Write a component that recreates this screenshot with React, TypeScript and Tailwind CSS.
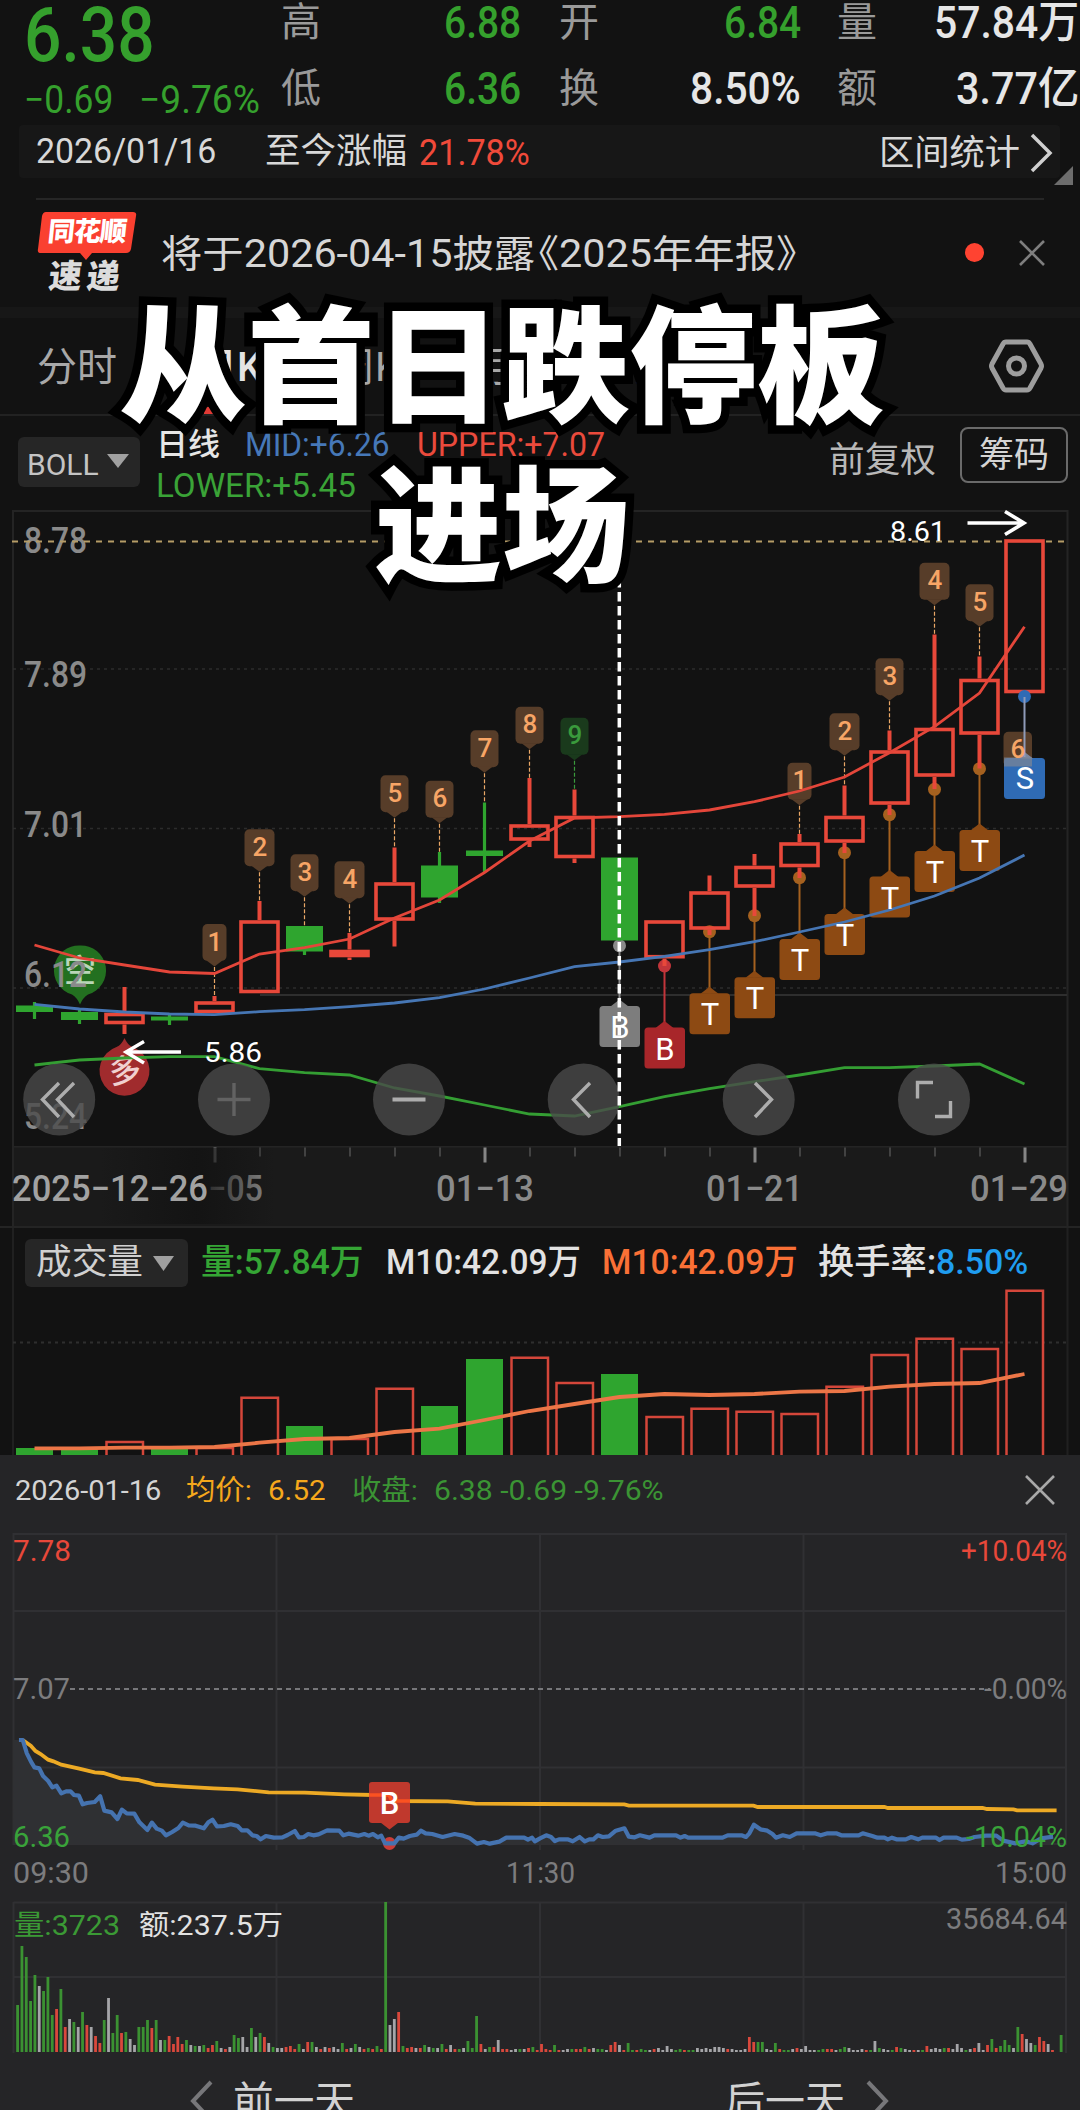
import React, { useLayoutEffect, useRef } from 'react';

const UP = '#e8483a';
const DOWN = '#2fa52f';

const cx = (i: number) => 34.5 + i * 45;

// [dir, bodyTop, bodyBottom, wickTop, wickBottom]
type Candle = ['u' | 'd', number, number, number, number];

const candles: Candle[] = [
  ['d', 1005.5, 1012, 1002, 1019],
  ['d', 1012, 1020, 1008, 1024],
  ['u', 1012.5, 1024.5, 987, 1034],
  ['d', 1016.5, 1020.5, 1013, 1025],
  ['u', 1001, 1013.5, 996, 1013.5],
  ['u', 920, 993.5, 901, 993.5],
  ['d', 926, 951.5, 926, 955],
  ['u', 949.5, 957.5, 933, 960],
  ['u', 882, 921, 847.5, 946.5],
  ['d', 865.5, 897.5, 852, 903],
  ['d', 850.5, 856, 802.5, 873],
  ['u', 824, 841, 778, 847],
  ['u', 815.5, 858.5, 789.5, 863],
  ['d', 857.5, 940.5, 857.5, 940.5],
  ['u', 920, 958.7, 920, 966],
  ['u', 891, 930, 875.5, 935],
  ['u', 865.5, 888, 854, 916],
  ['u', 842, 867.5, 834, 878],
  ['u', 815.5, 843, 785.5, 853],
  ['u', 750, 805, 730.5, 815],
  ['u', 727.5, 777, 634.5, 789],
  ['u', 678.5, 735, 656.5, 768.5],
  ['u', 539, 693.5, 539, 693.5],
];

const upper = [945, 958, 965, 972, 973.5, 954, 947.7, 939, 918, 900, 872.5, 841, 818, 816.7, 814.3, 810, 801.7, 791, 777, 752.7, 726.7, 693, 626.7];
const mid = [1004.3, 1009, 1012, 1014, 1014.7, 1011.7, 1009.7, 1006.7, 1003, 997.7, 989, 978, 966.7, 962, 956.3, 949.7, 941.7, 932, 922, 910, 896, 878, 855];
const lower = [1065, 1060, 1058, 1056.7, 1056.7, 1068.7, 1072.7, 1075, 1088, 1096, 1105, 1114, 1116, 1106.7, 1096.7, 1088.7, 1081.7, 1075, 1067.7, 1067.7, 1066, 1064, 1084];

const counts = [
  { i: 4, n: '1', y: 924, w: 24 },
  { i: 5, n: '2', y: 829.3, w: 30 },
  { i: 6, n: '3', y: 854.3, w: 28 },
  { i: 7, n: '4', y: 861.3, w: 30 },
  { i: 8, n: '5', y: 775.3, w: 28 },
  { i: 9, n: '6', y: 780.7, w: 28 },
  { i: 10, n: '7', y: 730.3, w: 28 },
  { i: 11, n: '8', y: 706.7, w: 28 },
  { i: 12, n: '9', y: 717.7, w: 28 },
  { i: 17, n: '1', y: 762.7, w: 24 },
  { i: 18, n: '2', y: 713.3, w: 30 },
  { i: 19, n: '3', y: 658.3, w: 28 },
  { i: 20, n: '4', y: 562.7, w: 30 },
  { i: 21, n: '5', y: 584.3, w: 28 },
];

const trades = [
  { i: 13, t: 'B', y: 1006, dot: 945.7, box: '#7d7d7d', line: '#8a8a8a' },
  { i: 14, t: 'B', y: 1027.5, dot: 966, box: '#a8262a', line: '#c2353a' },
  { i: 15, t: 'T', y: 993.3, dot: 931.7, box: '#8d4a13', line: '#a5611f' },
  { i: 16, t: 'T', y: 977.3, dot: 915.7, box: '#8d4a13', line: '#a5611f' },
  { i: 17, t: 'T', y: 939, dot: 877.7, box: '#8d4a13', line: '#a5611f' },
  { i: 18, t: 'T', y: 914, dot: 852.7, box: '#8d4a13', line: '#a5611f' },
  { i: 19, t: 'T', y: 876.5, dot: 814.7, box: '#8d4a13', line: '#a5611f' },
  { i: 20, t: 'T', y: 851, dot: 789.3, box: '#8d4a13', line: '#a5611f' },
  { i: 21, t: 'T', y: 830, dot: 768.7, box: '#8d4a13', line: '#a5611f' },
];

const volumeTops = [1448, 1449, 1441, 1449, 1447, 1396.7, 1426, 1438, 1387.7, 1406, 1359, 1356.7, 1382, 1374, 1416, 1407.7, 1410.7, 1413, 1385.7, 1354, 1337.7, 1348, 1289.7];
const volumeMa = [1448.3, 1448.3, 1447.7, 1447.7, 1447, 1442.7, 1439, 1438, 1432, 1428.7, 1420, 1411, 1404, 1397, 1394, 1395, 1394, 1391.7, 1391, 1386.7, 1384, 1383, 1374];

// intraday lines, in a 3136 x 600 sample grid
const price =
  '55,120 66,120 78,160 90,185 100,202 114,205 125,228 140,243 152,262 164,257 178,280 192,274 205,274 215,285 229,287 240,313 253,309 275,306 291,289 303,332 324,337 341,357 354,329 368,340 390,341 405,367 428,390 441,368 455,386 470,392 482,406 500,396 518,384 531,368 548,376 568,377 592,385 605,367 617,359 630,379 650,378 670,373 690,378 702,391 718,391 733,406 745,408 757,418 772,408 795,413 820,412 835,405 856,393 868,412 882,411 895,402 910,406 925,403 950,391 985,392 997,406 1012,401 1040,407 1058,402 1070,407 1083,402 1097,412 1107,407 1118,430 1145,430 1158,413 1172,416 1190,408 1210,404 1222,392 1236,400 1255,402 1285,411 1320,402 1345,407 1362,413 1385,431 1405,426 1422,431 1450,425 1470,413 1522,413 1533,419 1545,413 1553,424 1568,415 1586,406 1600,411 1611,423 1623,418 1648,418 1663,424 1683,411 1698,424 1711,418 1723,418 1736,406 1750,411 1768,409 1788,392 1813,385 1826,410 1843,412 1858,406 1886,413 1900,406 1963,406 1976,413 1988,408 1998,413 2098,413 2113,406 2153,406 2166,411 2176,400 2189,374 2208,388 2228,392 2243,402 2253,413 2273,406 2293,411 2313,400 2366,400 2383,406 2403,400 2428,400 2443,406 2493,406 2505,400 2533,408 2548,413 2568,413 2578,418 2590,413 2603,418 2630,418 2646,411 2666,418 2678,413 2718,413 2728,420 2740,413 2778,413 2793,419 2813,417 2830,411 2863,407 2893,407 2913,422 2948,430 2978,424 2998,430 3023,415 3058,410';
const average =
  '66,120 90,138 103,153 118,162 140,179 155,184 178,194 230,206 275,217 300,219 350,235 400,240 450,254 530,260 620,265 690,268 780,277 885,278 1000,283 1085,285 1131,303 1300,304 1380,311 1568,312 1813,313 1826,317 2188,317 2200,321 2568,321 2578,324 2853,324 2866,327 2943,328 2953,331 3068,331';

// one token per minute: colour (g/r/w) + bar height
const minuteVolume =
  'g47 g106 g95 g51 g77 w66 g61 g75 g37 r43 g63 r25 w33 g30 w25 g40 r27 w25 r16 r9 g32 w54 g19 g37 r19 g20 w13 w7 g25 g25 g32 r24 g32 w12 g12 r16 r8 r15 r8 g12 w7 g6 w6 g7 r4 r7 g11 w4 r3 w5 g17 g14 w15 w5 g24 w15 g19 r15 w9 g5 w4 w4 r5 r6 r3 g8 w3 r10 g10 w5 r3 w5 r4 w5 w3 g9 r3 w4 g8 w5 r3 g4 r3 g6 r3 g150 w27 w33 r40 g6 r4 r5 w4 r4 g7 w5 g4 w4 g8 r3 w7 r3 g3 w4 g11 g4 g36 r8 w3 g5 r5 w12 r3 r3 w2 w3 g3 w3 r4 g5 r2 r8 r3 r2 g7 r2 w2 w3 g3 r3 r3 g5 r3 w4 g3 g3 w2 r7 r10 w7 r2 g9 g2 r2 g3 g2 w2 r3 w4 w2 w6 w3 g2 g3 r2 g2 g2 w4 w3 w4 w3 w5 w5 w4 r3 w3 w2 w2 w3 r15 r10 g10 g10 w3 w2 g9 r3 g2 g2 w3 r4 w3 w6 w2 w2 g2 g3 r3 r3 w2 g3 g5 w4 w2 w2 w3 r2 g2 w11 g4 w3 w2 g2 r5 g4 w3 w2 r2 w2 g2 r6 w3 w4 w3 g4 r4 w3 w8 w4 g2 w3 r4 w9 w2 r7 g13 r4 g6 g12 g7 w4 g25 r18 w13 w9 g7 r15 r11 w8 r2 w0 g17';
const minuteFill: Record<string, string> = { g: '#3b9232', r: '#d9483c', w: '#a5a5a8' };

const toPoints = (ys: number[]) => ys.map((y, i) => `${cx(i)},${y}`).join(' ');

interface FitProps {
  w: number;
  className?: string;
  children: React.ReactNode;
}

// squeezes a run of text into a fixed width, like the condensed digits of the quote font
function Fit({ w, className = '', children }: FitProps) {
  const ref = useRef<HTMLSpanElement>(null);
  useLayoutEffect(() => {
    const el = ref.current;
    if (el) el.style.transform = `scaleX(${w / el.offsetWidth})`;
  }, [w]);
  return (
    <span className={`block shrink-0 whitespace-nowrap ${className}`} style={{ width: w }}>
      <span ref={ref} className="inline-block origin-left">
        {children}
      </span>
    </span>
  );
}

interface LabelProps {
  x: number;
  y: number;
  w: number;
  size: number;
  fill: string;
  weight?: number;
  children: string;
}

function Label({ x, y, w, size, fill, weight, children }: LabelProps) {
  return (
    <text x={x} y={y} textLength={w} lengthAdjust="spacingAndGlyphs" fontSize={size} fontWeight={weight} fill={fill}>
      {children}
    </text>
  );
}

function Quote() {
  return (
    <div className="flex h-[125px] shrink-0">
      <div className="w-[281px] shrink-0 pl-[24px] text-[#35a02d]">
        <Fit w={131} className="h-[70px] text-[76px] leading-[70px] font-medium">6.38</Fit>
        <div className="flex h-[56px] text-[39px] leading-[60px]">
          <Fit w={89}>−0.69</Fit>
          <Fit w={121} className="ml-[26px]">−9.76%</Fit>
        </div>
      </div>
      <div className="grid w-[798px] shrink-0 grid-cols-[278px_278px_242px] grid-rows-[66px_59px] text-[40px] leading-[46px] text-[#9a9a9a]">
        <Cell label="高" value="6.88" w={77} pr={38} tone="text-[#35a02d]" />
        <Cell label="开" value="6.84" w={77} pr={36} tone="text-[#35a02d]" />
        <Cell label="量" value="57.84万" w={145} pr={0} tone="text-[#e6e6e6]" />
        <Cell label="低" value="6.36" w={77} pr={38} tone="text-[#35a02d]" />
        <Cell label="换" value="8.50%" w={111} pr={36} tone="text-[#e6e6e6]" />
        <Cell label="额" value="3.77亿" w={123} pr={0} tone="text-[#e6e6e6]" />
      </div>
    </div>
  );
}

function Cell({ label, value, w, pr, tone }: { label: string; value: string; w: number; pr: number; tone: string }) {
  return (
    <div className="flex justify-between" style={{ paddingRight: pr }}>
      <span>{label}</span>
      <Fit w={w} className={`text-[44px] font-medium ${tone}`}>{value}</Fit>
    </div>
  );
}

function RangeBar() {
  return (
    <div className="relative ml-[19px] mr-[20px] flex h-[53px] shrink-0 items-center rounded bg-[#171717] pl-[17px] text-[35px] text-[#d8d8d8]">
      <Fit w={180} className="pt-[2px]">2026/01/16</Fit>
      <Fit w={142} className="ml-[49px] pt-[2px]">至今涨幅</Fit>
      <Fit w={111} className="ml-[12px] pt-[2px] text-[36px] text-[#f04a3a]">21.78%</Fit>
      <Fit w={141} className="ml-[349px] pt-[5px]">区间统计</Fit>
      <svg className="ml-[9px] mt-[3px] h-[42px] w-[26px]" viewBox="0 0 26 42" fill="none" stroke="#d0d0d0" strokeWidth="3.5">
        <path d="M3 3l18 18L3 39" />
      </svg>
      <svg className="absolute -right-[13px] -bottom-[7px] h-[19px] w-[19px]" viewBox="0 0 19 19">
        <path d="M19 0v19H0z" fill="#6d6d6d" />
      </svg>
    </div>
  );
}

function News() {
  return (
    <div className="flex h-[107px] shrink-0 items-start">
      <div className="ml-[37px] mt-[11px] w-[100px] shrink-0">
        <div className="relative">
          <svg className="h-[50px] w-[100px]" viewBox="0 0 100 50">
            <path d="M9 1h87q4 0 3 4l-5 33q-1 4-5 4H55l-6 7-6-7H4q-4 0-3-4L5 5q1-4 4-4z" fill="#fa4030" />
          </svg>
          <span className="absolute left-[11px] top-[6px] inline-block -skew-x-6 text-[27px] leading-[31px] font-black tracking-[-1px] text-white">同花顺</span>
        </div>
        <span className="ml-[12px] block -skew-x-6 text-[33px] leading-[32px] font-black tracking-[5px] text-[#dcdcdc]">速递</span>
      </div>
      <Fit w={656} className="-mr-[10px] ml-[24px] mt-[28px] text-[38px] leading-[52px] text-[#d6d6d6]">
        将于2026-04-15披露<span className="-ml-[16px]">《</span>2025年年报》
      </Fit>
      <span className="ml-[158px] mt-[43px] size-[19px] rounded-full bg-[#ff4331]" />
      <svg className="ml-[34px] mt-[39px] size-[28px]" viewBox="0 0 28 28" stroke="#7e7e7e" strokeWidth="2.6">
        <path d="M2 2l24 24M26 2L2 26" />
      </svg>
    </div>
  );
}

function Tabs() {
  return (
    <div className="relative flex h-[98px] shrink-0 items-center border-b-2 border-[#222] text-[40px] text-[#a8a8a8]">
      <span className="ml-[37px] w-[160px] pt-[3px]">分时</span>
      <span className="w-[138px] pt-[3px] font-medium text-[#e4e4e4]">日K</span>
      <span className="w-[138px] pt-[3px]">周K</span>
      <span className="w-[138px] pt-[3px]">月K</span>
      <span className="pt-[3px]">5分</span>
      <span className="absolute bottom-0 left-[204px] h-[7px] w-[11px] rounded-t bg-[#e03a35]" />
      <svg className="absolute left-[986px] top-[18px] size-[60px]" viewBox="0 0 60 60" fill="none" stroke="#9d9d9d" strokeWidth="5">
        <path d="M20 6h21q2 0 3 2l11 20q1 2 0 4L44 52q-1 2-3 2H20q-2 0-3-2L6 32q-1-2 0-4L17 8q1-2 3-2z" />
        <circle cx="30.5" cy="30" r="8" />
      </svg>
    </div>
  );
}

function BollBar() {
  return (
    <div className="flex h-[94px] shrink-0">
      <div className="ml-[18px] mt-[21px] flex h-[50px] w-[122px] items-center rounded-md bg-[#262626] pl-[9px] pt-[4px] text-[30px] text-[#c4c4c4]">
        <Fit w={72}>BOLL</Fit>
        <svg className="ml-[8px] mb-[6px] h-[14px] w-[22px]" viewBox="0 0 22 14"><path d="M0 0h22L11 14z" fill="#a0a0a0" /></svg>
      </div>
      <div className="ml-[16px] mt-[8px] w-[600px] text-[33px] leading-[41px]">
        <div className="flex">
          <Fit w={64} className="text-[31px] font-medium text-[#e6e6e6]">日线</Fit>
          <Fit w={145} className="ml-[25px] text-[#4678b8]">MID:+6.26</Fit>
          <Fit w={188} className="ml-[27px] text-[#ea4a3c]">UPPER:+7.07</Fit>
        </div>
        <Fit w={200} className="text-[#3aa337]">LOWER:+5.45</Fit>
      </div>
      <Fit w={107} className="ml-[73px] mt-[21px] text-[35px] leading-[48px] text-[#b8b8b8]">前复权</Fit>
      <div className="ml-[24px] mt-[11px] flex h-[56px] w-[108px] items-center justify-center rounded-lg border-2 border-[#6a6a6a] pt-[3px] text-[35px] text-[#d4d4d4]">
        筹码
      </div>
    </div>
  );
}

function Count({ x, y, w, n }: { x: number; y: number; w: number; n: string }) {
  const green = n === '9';
  return (
    <g>
      <rect x={x - w / 2} y={y} width={w} height="37" rx="5" fill={green ? '#1a3a1c' : '#573d29'} />
      <path d={`M${x - 8} ${y + 36.5}h16l-8 6z`} fill={green ? '#1a3a1c' : '#573d29'} />
      <text x={x + 0.5} y={y + 26.5} fontSize="26" fontWeight="500" textAnchor="middle" fill={green ? '#3a9a3c' : '#f7a566'}>{n}</text>
    </g>
  );
}

const axis = [
  { v: '8.78', y: 552.5 },
  { v: '7.89', y: 687 },
  { v: '7.01', y: 837 },
  { v: '6.12', y: 987 },
];

function KChart() {
  return (
    <svg className="block h-[636px] w-[1080px] shrink-0" viewBox="0 510 1080 636">
      <path d="M13 1146V511H1067.5V1146" fill="none" stroke="#242424" strokeWidth="2" />
      <path d="M13 669H1067M13 828.5H1067M13 988H1067" stroke="#2c2c2c" strokeWidth="1.5" strokeDasharray="3 4" />
      <path d="M260 995H1067" stroke="#2e2e2e" strokeWidth="2" />

      <g>
        <path d="M80 945.5a25 25 0 0 1 8 49q-5 3-8 10q-3-7-8-10a25 25 0 0 1 8-49z" fill="#237020" />
        <text x="80" y="982" fontSize="32" fontWeight="500" textAnchor="middle" fill="#b9d6b8">空</text>
      </g>
      <g>
        <path d="M124.5 1038q3 7 8 9a25 25 0 1 1-16 0q5-2 8-9z" fill="#a02b2d" />
        <text x="125" y="1082" fontSize="32" fontWeight="500" textAnchor="middle" fill="#f0d0d0" transform="rotate(-8 125 1071)">多</text>
      </g>

      {counts.map(({ i, n, y }) => (
        <path key={i} d={`M${cx(i)} ${y + 43}V${Math.min(candles[i][3], candles[i][1])}`} stroke={n === '9' ? '#3a9a3c' : '#e9a766'} strokeWidth="1.2" strokeDasharray="4 2" />
      ))}

      {trades.map(({ i, dot, y, line }) => (
        <g key={i}>
          <path d={`M${cx(i)} ${dot}V${y}`} stroke={line} strokeWidth="2" />
          <circle cx={cx(i)} cy={dot} r="6.5" fill={line} />
        </g>
      ))}

      {candles.map(([dir, top, bottom, hi, lo], i) => (
        <g key={i}>
          {dir === 'u' ? (
            <>
              <path d={`M${cx(i)} ${hi}V${top}M${cx(i)} ${bottom}V${lo}`} stroke={UP} strokeWidth="4" />
              <rect x={cx(i) - 18.5} y={top + 2} width="37" height={bottom - top - 4} fill={bottom - top < 10 ? UP : 'none'} stroke={UP} strokeWidth="3.6" />
            </>
          ) : (
            <>
              <path d={`M${cx(i)} ${hi}V${lo}`} stroke={DOWN} strokeWidth="3.2" />
              <rect x={cx(i) - 18.5} y={top} width="37" height={bottom - top} fill={DOWN} />
            </>
          )}
        </g>
      ))}

      {trades.map(({ i, y, box }) => (
        <g key={i}>
          <rect x={cx(i) - 20} y={y} width="40.5" height="41" rx="3.5" fill={box} />
          <path d={`M${cx(i) - 9} ${y + 0.5}h18l-9-7z`} fill={box} />
        </g>
      ))}

      <circle cx={cx(22)} cy="696.5" r="6.5" fill="#2f6bb5" />
      {counts.map((c) => (
        <Count key={c.i} x={cx(c.i)} y={c.y} w={c.w} n={c.n} />
      ))}
      <rect x="1003.5" y="731.7" width="28.5" height="35" rx="5" fill="#573d29" />
      <rect x="1004" y="758" width="41" height="41" rx="3.5" fill="#2f6bb5" />
      <path d="M1015 758.5h18l-9-7z" fill="#7b87a0" />
      <rect x="1004" y="757.5" width="28" height="9" fill="#7f8694" opacity=".7" />
      <path d="M1024.5 697V757" stroke="#8f9bb8" strokeWidth="2" />
      <text x="1018" y="758" fontSize="26" fontWeight="500" textAnchor="middle" fill="#f7a566">6</text>
      <text x="1025" y="789" fontSize="31" textAnchor="middle" fill="#fff">S</text>

      <polyline points={toPoints(upper)} fill="none" stroke="#e4463a" strokeWidth="2.8" />
      <polyline points={toPoints(mid)} fill="none" stroke="#4676b4" strokeWidth="2.8" />
      <polyline points={toPoints(lower)} fill="none" stroke="#349e33" strokeWidth="2.8" />

      {trades.map(({ i, t, y }) => (
        <text key={i} x={cx(i) + 0.5} y={y + 32} fontSize="31" textAnchor="middle" fill="#fff">{t}</text>
      ))}

      {axis.map(({ v, y }) => (
        <Label key={v} x={24} y={y} w={63} size={36.5} fill="#8a8a8a" weight={500}>{v}</Label>
      ))}
      <Label x={24} y={1129} w={63} size={36.5} fill="#8a8a8a" weight={500}>5.24</Label>
      <path d="M12 541.5H1005M1046 541.5H1066" stroke="#b59c66" strokeWidth="2" strokeDasharray="6 6" />

      <path d="M967.5 523H1023M1005 511.5L1024 523 1005 534.5" fill="none" stroke="#fff" strokeWidth="3.5" />
      <Label x={890} y={540.5} w={56} size={28.5} fill="#fff">8.61</Label>
      <path d="M181 1052H126M144 1041.5L126 1052l18 11" fill="none" stroke="#fff" strokeWidth="3.5" />
      <Label x={204} y={1062} w={58} size={28} fill="#fff">5.86</Label>

      {[59.2, 234, 409, 583.7, 758.7, 934].map((x) => (
        <circle key={x} cx={x} cy="1099.5" r="36" fill="#4a4a4a" opacity=".8" />
      ))}
      <path d="M619.3 578V1146" stroke="#fff" strokeWidth="3.5" strokeDasharray="9.5 4.5" />
      <g fill="none" stroke="#adadad" strokeWidth="3.4">
        <path d="M59 1083L42.5 1099.5 59 1117M74 1083L57.5 1099.5 74 1117" />
        <path d="M217.5 1099.5h33M234 1083v33" stroke="#626262" />
        <path d="M392.5 1099.5h33" strokeWidth="4" />
        <path d="M590 1083L573.5 1099.5 590 1117M755 1083L771.5 1099.5 755 1117" />
        <path d="M917.5 1098.5v-16h15.5M950.5 1101v15.5h-15.5" />
      </g>
    </svg>
  );
}

function DateAxis() {
  const ticks = Array.from({ length: 19 }, (_, k) => k + 4);
  return (
    <svg className="block h-[80px] w-[1080px] shrink-0" viewBox="0 1146 1080 80">
      <defs>
        <linearGradient id="fade" x1="0" x2="1" y1="0" y2="0">
          <stop offset="0" stopColor="#131313" stopOpacity="0" />
          <stop offset=".55" stopColor="#131313" stopOpacity=".9" />
          <stop offset="1" stopColor="#131313" stopOpacity="0" />
        </linearGradient>
      </defs>
      <rect x="13" y="1146" width="1054.5" height="80" fill="#1a1a1a" />
      <path d="M13 1146.5H1067.5M13 1146V1226M1067.5 1146V1226" stroke="#242424" strokeWidth="2" />
      {ticks.map((i) => {
        const major = i % 6 === 4;
        return <path key={i} d={`M${cx(i) + 0.5} 1147.5v${major ? 15 : 9}`} stroke={major ? '#858585' : '#505050'} strokeWidth={major ? 3 : 1.5} />;
      })}
      <g fontWeight="500">
        <Label x={208} y={1200.5} w={55} size={36} fill="#8a8a8a">−05</Label>
        <rect x="100" y="1148" width="175" height="76" fill="url(#fade)" />
        <Label x={12} y={1200.5} w={196} size={36} fill="#a2a2a2">2025−12−26</Label>
        <Label x={436} y={1200.5} w={98} size={36} fill="#8a8a8a">01−13</Label>
        <Label x={706} y={1200.5} w={97} size={36} fill="#8a8a8a">01−21</Label>
        <Label x={970} y={1200.5} w={98} size={36} fill="#8a8a8a">01−29</Label>
      </g>
    </svg>
  );
}

function Volume() {
  return (
    <div className="flex h-[229px] shrink-0 flex-col border-t-2 border-[#242424]">
      <div className="flex h-[70px] shrink-0 items-center text-[35px] text-[#e2e2e2]">
        <div className="ml-[25px] flex h-[48px] w-[163px] items-center rounded-md bg-[#262626] pl-[11px] text-[#d0d0d0]">
          <Fit w={107}>成交量</Fit>
          <svg className="ml-[10px] h-[15px] w-[21px]" viewBox="0 0 21 15"><path d="M0 0h21L10.5 15z" fill="#a0a0a0" /></svg>
        </div>
        <Fit w={163} className="ml-[13px] font-medium text-[#35a535]">量:57.84万</Fit>
        <Fit w={195} className="ml-[22px] font-medium">M10:42.09万</Fit>
        <Fit w={196} className="ml-[21px] font-medium text-[#fa7036]">M10:42.09万</Fit>
        <Fit w={118} className="ml-[20px] font-medium">换手率:</Fit>
        <Fit w={92} className="font-medium text-[#1f9df0]">8.50%</Fit>
      </div>
      <svg className="block h-[157px] w-[1080px] shrink-0" viewBox="0 1298 1080 157" overflow="visible">
        <path d="M13 1228V1455M1067.5 1228V1455" stroke="#202020" strokeWidth="2" />
        <path d="M13 1342.5H1067" stroke="#2e2e2e" strokeWidth="2" strokeDasharray="3 4" />
        {volumeTops.map((y, i) =>
          candles[i][0] === 'u' ? (
            <path key={i} d={`M${cx(i) - 18} 1455V${y + 1}h36.5V1455`} fill="none" stroke="#d4463a" strokeWidth="2.5" />
          ) : (
            <rect key={i} x={cx(i) - 18.5} y={y} width="37" height={1455 - y} fill={DOWN} />
          ),
        )}
        <polyline points={toPoints(volumeMa)} fill="none" stroke="#ec7647" strokeWidth="3.8" />
      </svg>
    </div>
  );
}

function Intraday() {
  return (
    <svg className="block h-[368px] w-[1080px] shrink-0" viewBox="0 1526 1080 368">
      <path d="M13.5 1534H1066V1844H13.5zM13.5 1611H1066M13.5 1767.5H1066M276.5 1534V1850M540 1534V1850M803.5 1534V1850" fill="none" stroke="#303033" strokeWidth="2" />
      <path d="M70 1689H990" stroke="#77777a" strokeWidth="2" strokeDasharray="5 4" />
      <g transform="translate(0 1700) scale(.34439 .33333)">
        <polygon points={`${price} 3058,432 40,432 40,120`} fill="#2f3033" />
        <polyline points={average} fill="none" stroke="#edaa25" strokeWidth="3.8" vectorEffect="non-scaling-stroke" />
      </g>
      <circle cx="389.5" cy="1843.5" r="6.5" fill="#cc3d38" />
      <polyline points={price} transform="translate(0 1700) scale(.34439 .33333)" fill="none" stroke="#4573b0" strokeWidth="4.2" strokeLinejoin="round" vectorEffect="non-scaling-stroke" />
      <rect x="369" y="1782" width="41" height="41" rx="3" fill="#c0392d" />
      <path d="M380.5 1822.5h18l-9 7z" fill="#c0392d" />
      <path d="M369 1795H389L392 1801H410" fill="none" stroke="#fb5221" strokeWidth="3.6" />
      <text x="389.5" y="1814" fontSize="31" fontWeight="500" textAnchor="middle" fill="#fff">B</text>
      <g>
        <Label x={13} y={1561} w={58} size={29} fill="#e8483a">7.78</Label>
        <Label x={13} y={1698.5} w={57} size={29} fill="#7c7c7e">7.07</Label>
        <Label x={13} y={1846.5} w={57} size={29} fill="#39a33a">6.36</Label>
        <Label x={961} y={1561} w={106} size={29} fill="#e8483a">+10.04%</Label>
        <Label x={984} y={1698.5} w={83} size={29} fill="#7c7c7e">-0.00%</Label>
        <Label x={966} y={1846.5} w={101} size={29} fill="#39a33a">-10.04%</Label>
        <Label x={13} y={1882.5} w={76} size={29} fill="#7c7c7e">09:30</Label>
        <Label x={506} y={1882.5} w={69} size={29} fill="#7c7c7e">11:30</Label>
        <Label x={995} y={1882.5} w={72} size={29} fill="#7c7c7e">15:00</Label>
      </g>
    </svg>
  );
}

function MinuteVolume() {
  return (
    <svg className="block h-[168px] w-[1080px] shrink-0" viewBox="0 1894 1080 168">
      <path d="M13.5 1902.5H1066V2053M13.5 1902V2053M13.5 1977H1066M276.5 1902V2053M540 1902V2053M803.5 1902V2053" fill="none" stroke="#303033" strokeWidth="2" />
      {minuteVolume.split(' ').map((bar, i) => {
        const h = Number(bar.slice(1));
        return <rect key={i} x={16.2 + i * 4.33} y={2052 - h} width="2.8" height={h} fill={minuteFill[bar[0]]} />;
      })}
      <Label x={14} y={1935} w={106} size={28} fill="#3b9a35">量:3723</Label>
      <Label x={139} y={1935} w={144} size={28} fill="#e2e2e2">额:237.5万</Label>
      <Label x={946} y={1929} w={121} size={29} fill="#7c7c7e">35684.64</Label>
    </svg>
  );
}

function DayPanel() {
  return (
    <div className="flex h-[655px] shrink-0 flex-col bg-[#252527]">
      <div className="flex h-[71px] shrink-0 items-center pl-[15px] text-[28px] text-[#d4d4d4]">
        <Fit w={146}>2026-01-16</Fit>
        <Fit w={66} className="ml-[25px] text-[#f5a81c]">均价:</Fit>
        <Fit w={58} className="ml-[16px] text-[#f5a81c]">6.52</Fit>
        <Fit w={66} className="ml-[26px] text-[#3b9434]">收盘:</Fit>
        <Fit w={230} className="ml-[16px] text-[#3b9434]">6.38 -0.69 -9.76%</Fit>
        <svg className="ml-[360px] mb-[2px] size-[32px]" viewBox="0 0 32 32" stroke="#a8a8a8" strokeWidth="2.6">
          <path d="M2 2l28 28M30 2L2 30" />
        </svg>
      </div>
      <Intraday />
      <MinuteVolume />
      <div className="flex h-[48px] shrink-0 overflow-hidden pt-[18px] text-[40px] leading-[44px] text-[#d2d2d2]">
        <svg className="ml-[190px] h-[42px] w-[24px] shrink-0" viewBox="0 0 24 42" fill="none" stroke="#77777a" strokeWidth="4">
          <path d="M21 2L3 21l18 19" />
        </svg>
        <Fit w={122} className="ml-[19px]">前一天</Fit>
        <Fit w={120} className="ml-[370px]">后一天</Fit>
        <svg className="ml-[21px] h-[42px] w-[24px] shrink-0" viewBox="0 0 24 42" fill="none" stroke="#77777a" strokeWidth="4">
          <path d="M2 2l18 19L2 40" />
        </svg>
      </div>
    </div>
  );
}

export default function App() {
  return (
    <div className="relative flex h-[2110px] w-[1080px] flex-col overflow-hidden bg-[#121212] font-['Roboto','Noto_Sans_CJK_SC',sans-serif]">
      <Quote />
      <RangeBar />
      <div className="mx-[36px] mt-[20px] h-[2px] shrink-0 bg-[#262626]" />
      <News />
      <div className="h-[11px] shrink-0 bg-[#171717]" />
      <Tabs />
      <BollBar />
      <KChart />
      <DateAxis />
      <Volume />
      <DayPanel />

      <div className="absolute left-0 top-[290px] w-[1004px] text-center text-[127.5px] leading-[159px] font-black text-white [-webkit-text-stroke:17px_#000] [paint-order:stroke_fill] [stroke-linejoin:round]">
        从首日跌停板
        <br />
        进场
      </div>
    </div>
  );
}
